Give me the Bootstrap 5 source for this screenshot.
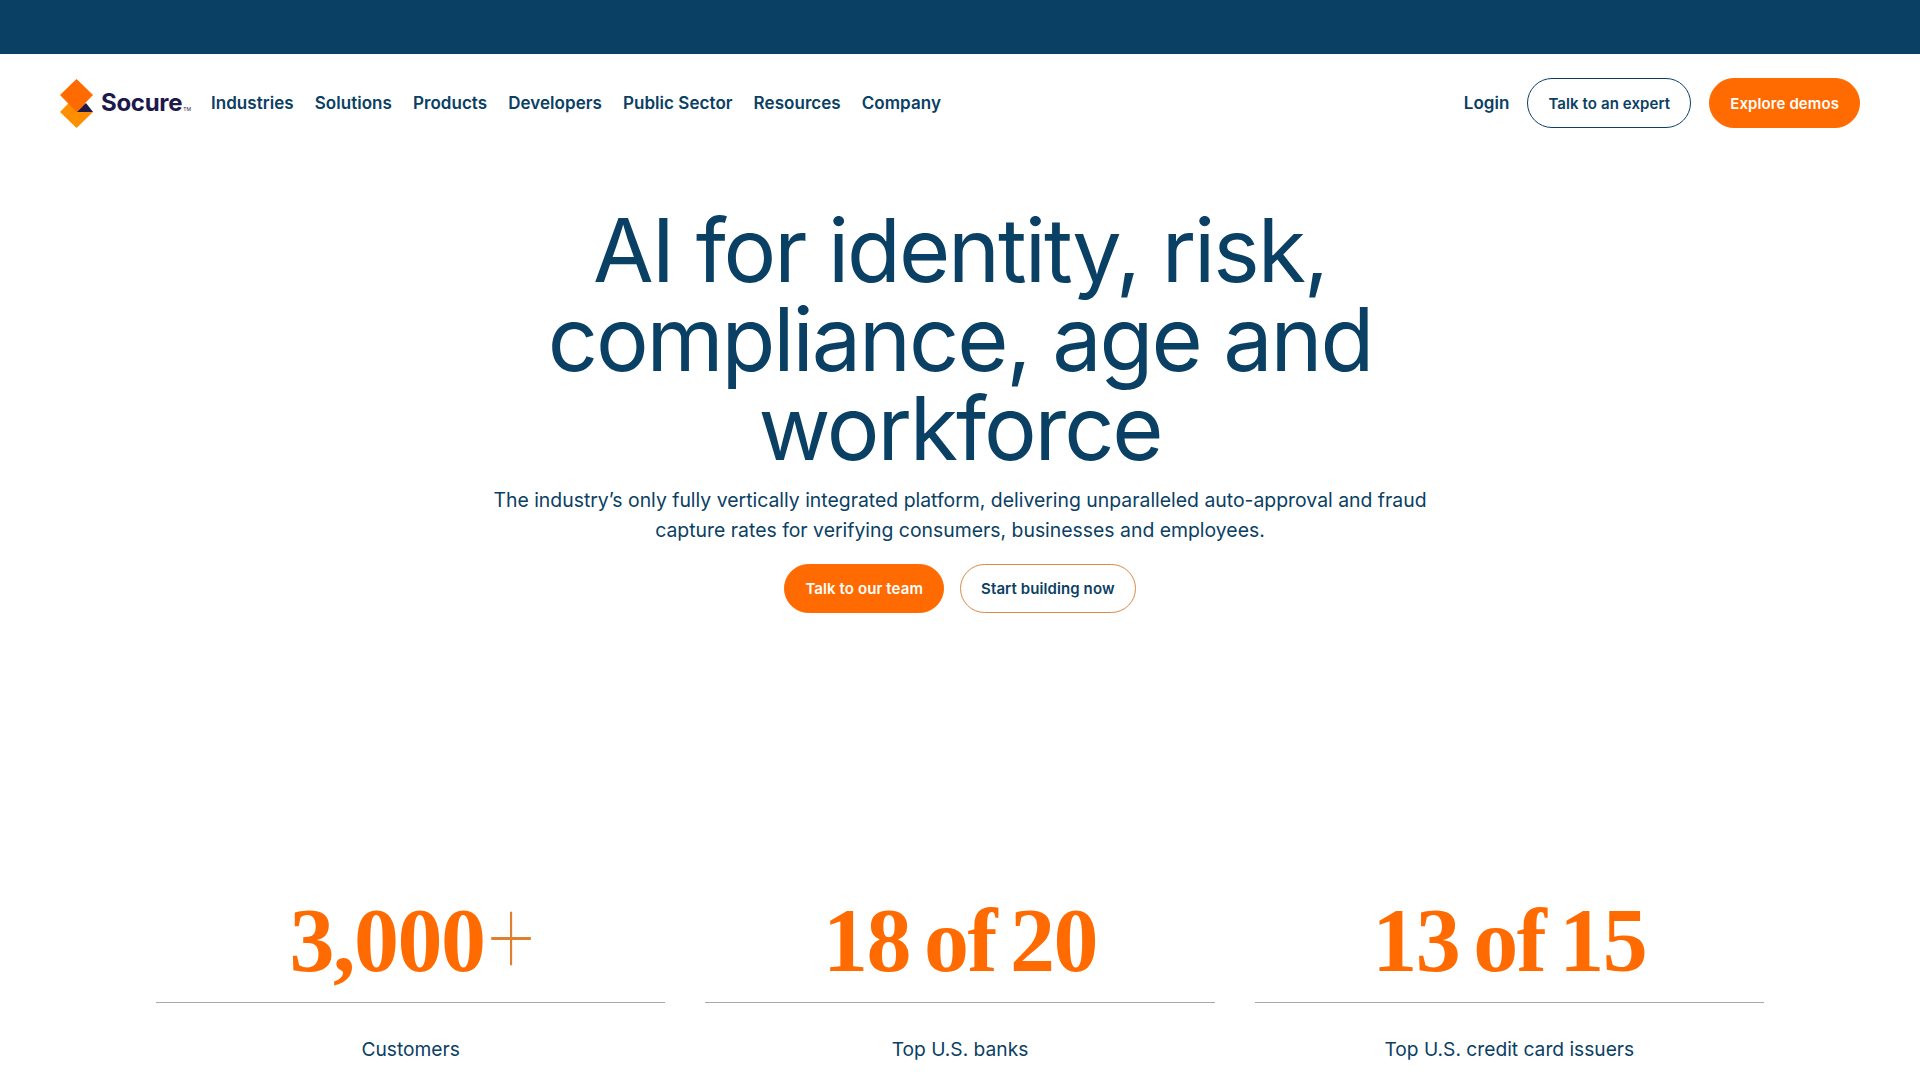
<!DOCTYPE html>
<html lang="en">
<head>
    <meta charset="UTF-8">
    <meta name="viewport" content="width=device-width, initial-scale=1.0">
    <title>Socure</title>
    <link href="https://cdn.jsdelivr.net/npm/bootstrap@5.3.0/dist/css/bootstrap.min.css" rel="stylesheet">
    <style>
        body {
            font-family: "Inter", "Liberation Sans", sans-serif;
            color: #0a4064;
            background: #fff;
            height: 1080px;
            overflow: hidden;
        }

        .top-strip {
            height: 54px;
            background-color: #0a4064;
        }

        .site-nav {
            height: 98px;
            padding: 0 60px;
        }

        .brand-mark {
            display: flex;
            align-items: center;
            gap: 8px;
            text-decoration: none;
            margin-right: 20px;
        }

        .brand-name {
            font-weight: 700;
            font-size: 24px;
            letter-spacing: -0.3px;
            color: #1d1a4b;
            line-height: 1;
        }

        .brand-tm {
            font-size: 5px;
            line-height: 1;
            color: #1d1a4b;
            align-self: flex-end;
            margin-left: -7px;
            margin-bottom: 16px;
        }

        .menu-link {
            font-weight: 600;
            font-size: 17px;
            letter-spacing: 0.05px;
            padding-top: 2px;
            color: #0a4064;
            text-decoration: none;
        }

        .menu-row {
            gap: 21px;
        }

        .nav-actions {
            gap: 18px;
        }

        .pill {
            display: inline-flex;
            align-items: center;
            justify-content: center;
            height: 50px;
            padding: 2px 20px 0;
            border-radius: 25px;
            font-weight: 600;
            font-size: 15px;
            letter-spacing: 0.1px;
            color: #0a4064;
            text-decoration: none;
            border: 1px solid #0a4064;
        }

        .pill-fill {
            background-color: #ff6b00;
            border-color: #ff6b00;
            color: #fff;
        }

        .pill-line {
            border-color: #d98a4a;
        }

        .hero-actions .pill {
            height: 49px;
        }

        .hero-title {
            font-weight: 400;
            font-size: 88px;
            letter-spacing: -2.1px;
            line-height: 89px;
            margin: 54px auto 0;
            width: 900px;
        }

        .hero-text {
            font-size: 19.4px;
            line-height: 30px;
            width: 950px;
            margin: 12px auto 19px;
        }

        .stat-row {
            margin-top: 278px;
            padding: 0 156px;
            gap: 40px;
        }

        .stat-num {
            font-family: "Liberation Serif", serif;
            font-weight: 700;
            font-size: 90px;
            line-height: 100px;
            color: #ff6b00;
            letter-spacing: -1.5px;
            word-spacing: -7px;
            padding-bottom: 11px;
            border-bottom: 1px solid #a8a8a8;
        }

        .stat-plus {
            display: inline-block;
            margin-left: -4px;
            margin-right: -10px;
            font-family: "Inter", sans-serif;
            font-weight: 100;
            font-size: 96px;
            line-height: 0;
            color: #e07f30;
            letter-spacing: 0;
            vertical-align: 8px;
            transform: scaleY(1.35);
        }

        .stat-label {
            font-size: 19.2px;
            margin-top: 32px;
        }
    </style>
</head>
<body>
    <div class="top-strip"></div>

    <nav class="site-nav d-flex align-items-center">
        <a class="brand-mark" href="#">
            <svg width="33" height="49" viewBox="0 0 33 49">
                <polygon points="0,33 16.5,16 33,33 16.5,49" fill="#ff8f00"/>
                <polygon points="0,16 16.5,0 33,16 16.5,33" fill="#ff6b00"/>
                <polygon points="17,33 33,33 26,24" fill="#1d1a4b"/>
            </svg>
            <span class="brand-name">Socure</span>
            <span class="brand-tm">TM</span>
        </a>
        <div class="d-flex menu-row flex-grow-1">
            <a class="menu-link" href="#">Industries</a>
            <a class="menu-link" href="#">Solutions</a>
            <a class="menu-link" href="#">Products</a>
            <a class="menu-link" href="#">Developers</a>
            <a class="menu-link" href="#">Public Sector</a>
            <a class="menu-link" href="#">Resources</a>
            <a class="menu-link" href="#">Company</a>
        </div>
        <div class="nav-actions d-flex align-items-center">
            <a class="menu-link" href="#">Login</a>
            <a class="pill" href="#">Talk to an expert</a>
            <a class="pill pill-fill" href="#">Explore demos</a>
        </div>
    </nav>

    <main>
        <section class="text-center">
            <h1 class="hero-title">AI for identity, risk, compliance, age and workforce</h1>
            <p class="hero-text">The industry’s only fully vertically integrated platform, delivering unparalleled auto-approval and fraud capture rates for verifying consumers, businesses and employees.</p>
            <div class="hero-actions d-flex justify-content-center gap-3">
                <a class="pill pill-fill" href="#">Talk to our team</a>
                <a class="pill pill-line" href="#">Start building now</a>
            </div>
        </section>

        <section class="stat-row d-flex text-center">
            <div class="flex-fill w-100">
                <div class="stat-num">3,000<span class="stat-plus">+</span></div>
                <div class="stat-label">Customers</div>
            </div>
            <div class="flex-fill w-100">
                <div class="stat-num">18 of 20</div>
                <div class="stat-label">Top U.S. banks</div>
            </div>
            <div class="flex-fill w-100">
                <div class="stat-num">13 of 15</div>
                <div class="stat-label">Top U.S. credit card issuers</div>
            </div>
        </section>
    </main>

    <script src="https://cdn.jsdelivr.net/npm/bootstrap@5.3.0/dist/js/bootstrap.bundle.min.js"></script>
</body>
</html>
